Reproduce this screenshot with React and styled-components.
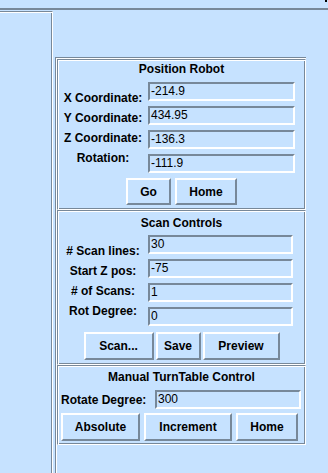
import React from 'react';
import styled, { createGlobalStyle, css } from 'styled-components';

const BG = '#c6e2ff';
const DARK = '#778899';
const LIGHT = '#ffffff';

const GlobalStyle = createGlobalStyle`
  html, body {
    margin: 0;
    background: ${BG};
    font-family: "Liberation Sans", Arial, sans-serif;
    font-size: 12px;
    color: #000;
  }
`;

// Tk style groove: dark then light on every edge
const groove = css`
  border: 1px solid;
  border-color: ${DARK} ${LIGHT} ${LIGHT} ${DARK};
  box-shadow: inset 1px 1px 0 ${LIGHT}, inset -1px -1px 0 ${DARK};
`;

const Screen = styled.div`
  position: relative;
  width: 328px;
  height: 473px;
  overflow: hidden;
`;

const TopBar = styled.div`
  height: 8px;
  border-bottom: 2px solid ${DARK};
`;

const CornerMark = styled.div`
  position: absolute;
  top: 0;
  right: 1px;
  width: 2px;
  height: 2px;
  background: #000;
`;

const Body = styled.div`
  display: flex;
  align-items: flex-start;
`;

const SidePanel = styled.div`
  width: 53px;
  min-height: 480px;
  margin-top: 1px;
  box-sizing: border-box;
  border-top: 1px solid ${DARK};
  border-right: 1px solid ${LIGHT};
  box-shadow: inset 0 1px 0 ${LIGHT}, inset -1px 0 0 ${DARK};
`;

const Workspace = styled.div`
  width: 251px;
  min-height: 480px;
  margin: 47px 0 0 2px;
  padding: 1px 0 0 1px;
  box-sizing: border-box;
  border-top: 1px solid ${DARK};
  border-left: 1px solid ${DARK};
  box-shadow: inset 1px 1px 0 ${LIGHT};
  display: flex;
  flex-direction: column;
`;

const Section = styled.div`
  ${groove};
  padding: ${({ $top }) => $top}px 0 ${({ $bottom }) => $bottom}px;
  display: flex;
  flex-direction: column;
`;

const Title = styled.div`
  height: 14px;
  line-height: 14px;
  font-weight: bold;
  text-align: center;
  white-space: nowrap;
`;

const Form = styled.div`
  display: flex;
  align-items: center;
  margin-top: ${({ $mt }) => $mt}px;
`;

const LabelColumn = styled.div`
  width: 90px;
  display: flex;
  flex-direction: column;
  align-items: center;
`;

const FieldLabel = styled.div`
  height: 20px;
  line-height: 20px;
  font-weight: bold;
  white-space: nowrap;
`;

const EntryColumn = styled.div`
  display: flex;
  flex-direction: column;
  gap: 5px;
`;

const Entry = styled.div`
  width: ${({ $w }) => $w}px;
  height: 19px;
  box-sizing: border-box;
  padding-left: 1px;
  border: 2px solid;
  border-color: ${DARK} ${LIGHT} ${LIGHT} ${DARK};
  line-height: 15px;
  white-space: nowrap;
  overflow: hidden;
`;

const InlineRow = styled.div`
  display: flex;
  align-items: center;
  margin: ${({ $mt }) => $mt}px 0 0 3px;
`;

const InlineLabel = styled.div`
  width: 94px;
  font-weight: bold;
  white-space: nowrap;
`;

const ButtonRow = styled.div`
  display: flex;
  justify-content: ${({ $start }) => ($start ? 'flex-start' : 'center')};
  gap: ${({ $gap }) => $gap}px;
  margin: ${({ $mt }) => $mt}px 0 0 ${({ $start }) => ($start ? 3 : 0)}px;
`;

const Button = styled.button`
  width: ${({ $w }) => $w}px;
  height: ${({ $h }) => $h}px;
  box-sizing: border-box;
  padding: 0;
  border: 2px solid;
  border-color: ${LIGHT} ${DARK} ${DARK} ${LIGHT};
  background: ${BG};
  color: #000;
  font-family: "Liberation Sans", Arial, sans-serif;
  font-size: 12px;
  font-weight: bold;
  white-space: nowrap;
`;

const position = [
  ['X Coordinate:', '-214.9'],
  ['Y Coordinate:', '434.95'],
  ['Z Coordinate:', '-136.3'],
  ['Rotation:', '-111.9'],
];

const scan = [
  ['# Scan lines:', '30'],
  ['Start Z pos:', '-75'],
  ['# of Scans:', '1'],
  ['Rot Degree:', '0'],
];

const Fields = ({ rows, width, mt }) => (
  <Form $mt={mt}>
    <LabelColumn>
      {rows.map(([label]) => (
        <FieldLabel key={label}>{label}</FieldLabel>
      ))}
    </LabelColumn>
    <EntryColumn>
      {rows.map(([label, value]) => (
        <Entry key={label} $w={width}>
          {value}
        </Entry>
      ))}
    </EntryColumn>
  </Form>
);

export default function App() {
  return (
    <Screen>
      <GlobalStyle />
      <TopBar />
      <CornerMark />
      <Body>
        <SidePanel />
        <Workspace>
          <Section $top={2} $bottom={4}>
            <Title>Position Robot</Title>
            <Fields rows={position} width={147} mt={6} />
            <ButtonRow $gap={4} $mt={5}>
              <Button $w={45} $h={27}>Go</Button>
              <Button $w={62} $h={27}>Home</Button>
            </ButtonRow>
          </Section>
          <Section $top={5} $bottom={4}>
            <Title>Scan Controls</Title>
            <Fields rows={scan} width={145} mt={5} />
            <ButtonRow $gap={2} $mt={6}>
              <Button $w={70} $h={28}>Scan...</Button>
              <Button $w={45} $h={28}>Save</Button>
              <Button $w={77} $h={28}>Preview</Button>
            </ButtonRow>
          </Section>
          <Section $top={4} $bottom={3}>
            <Title>Manual TurnTable Control</Title>
            <InlineRow $mt={6}>
              <InlineLabel>Rotate Degree:</InlineLabel>
              <Entry $w={146}>300</Entry>
            </InlineRow>
            <ButtonRow $start $gap={4} $mt={4}>
              <Button $w={79} $h={28}>Absolute</Button>
              <Button $w={88} $h={28}>Increment</Button>
              <Button $w={62} $h={28}>Home</Button>
            </ButtonRow>
          </Section>
        </Workspace>
      </Body>
    </Screen>
  );
}
